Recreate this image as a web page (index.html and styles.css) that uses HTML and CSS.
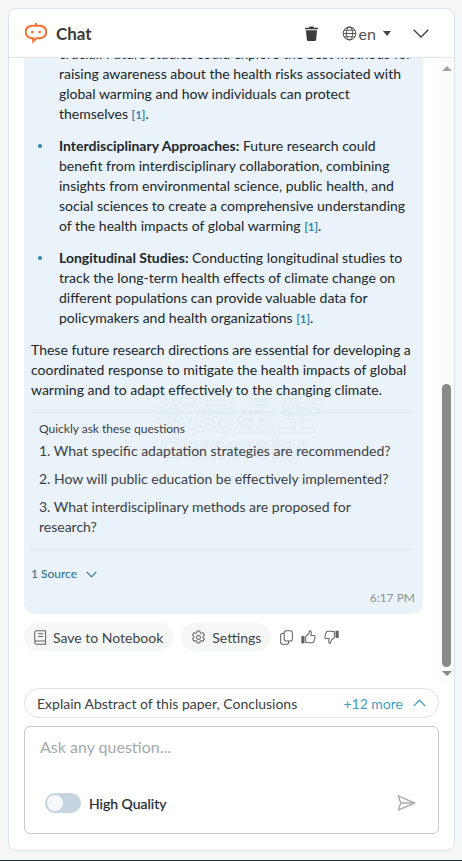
FILE: index.html
```html
<!DOCTYPE html>
<html lang="en">
<head>
<meta charset="utf-8">
<title>Chat</title>
<link rel="stylesheet" href="styles.css">
</head>
<body>
<div class="page">
<main class="card">
  <header class="head">
    <svg class="logo" viewBox="0 0 24 24" width="22" height="22" fill="none" stroke="#f37032" stroke-width="2.200">
      <path d="M12 1v3"/>
      <path d="M7.500 4h9a6.800 6.800 0 0 1 0 13.600h-4l-3.500 3.400v-3.400h-1.500a6.800 6.800 0 0 1 0-13.600z"/>
      <circle cx="8" cy="11" r="1.500" fill="#f37032" stroke="none"/>
      <circle cx="16" cy="11" r="1.500" fill="#f37032" stroke="none"/>
    </svg>
    <span class="title">Chat</span>
    <span class="spacer"></span>
    <svg class="trash" viewBox="0 0 14 16" width="13" height="15" fill="#3c3c3c">
      <path d="M0 1.800h4.300L5 .500h4l.7 1.300H14v1.700H0z"/>
      <path d="M1 4.500h12l-1 10.200c0 .7-.6 1.300-1.300 1.300H3.300C2.600 16 2 15.400 2 14.700z"/>
    </svg>
    <span class="lang">
      <svg viewBox="0 0 16 16" width="15" height="15" fill="none" stroke="#555" stroke-width="1.100">
        <circle cx="8" cy="8" r="6.800"/>
        <ellipse cx="8" cy="8" rx="3.200" ry="6.800"/>
        <path d="M1.200 8h13.600M2.200 4.500h11.600M2.200 11.500h11.600"/>
      </svg>
      <span>en</span>
      <span class="caret"></span>
    </span>
    <svg class="chev" viewBox="0 0 16 9" width="16" height="9" fill="none" stroke="#444" stroke-width="1.400">
      <path d="M.7.700 8 8 15.300.700"/>
    </svg>
  </header>

  <section class="scroll">
    <div class="stream">
      <article class="bubble">
        <ul class="points">
          <li class="first">crucial. Future studies could explore the best methods for raising awareness about the health risks associated with global warming and how individuals can protect themselves <a class="cite">[1]</a>.</li>
          <li><b>Interdisciplinary Approaches:</b> Future research could benefit from interdisciplinary collaboration, combining insights from environmental science, public health, and social sciences to create a comprehensive understanding of the health impacts of global warming <a class="cite">[1]</a>.</li>
          <li><b>Longitudinal Studies:</b> Conducting longitudinal studies to track the long-term health effects of climate change on different populations can provide valuable data for policymakers and health organizations <a class="cite">[1]</a>.</li>
        </ul>
        <p class="summary">These future research directions are essential for developing a coordinated response to mitigate the health impacts of global warming and to adapt effectively to the changing climate.</p>
        <div class="quick">
          <div class="quick-title">Quickly ask these questions</div>
          <div class="q">1. What specific adaptation strategies are recommended?</div>
          <div class="q">2. How will public education be effectively implemented?</div>
          <div class="q">3. What interdisciplinary methods are proposed for research?</div>
        </div>
        <div class="source">
          <span>1 Source</span>
          <svg viewBox="0 0 12 7" width="11" height="7" fill="none" stroke="#1d6a8c" stroke-width="1.200"><path d="M.7.700 6 6l5.300-5.300"/></svg>
        </div>
        <div class="time">6:17 PM</div>
        <div class="mark" aria-hidden="true">
          <div class="mark-a">游民星空</div>
          <div class="mark-b">Gamersky</div>
        </div>
      </article>
      <div class="actions">
        <button class="pill save">
          <svg viewBox="0 0 14 16" width="13" height="15" fill="none" stroke="#5f6468" stroke-width="1.100">
            <path d="M2.500.8h10v11h-10A1.700 1.700 0 0 0 .8 13.500V2.500A1.700 1.700 0 0 1 2.500.8z"/>
            <path d="M.8 13.500a1.700 1.700 0 0 0 1.700 1.700h10V12"/>
            <path d="M4.500 4h5.500M4.500 6.800h5.500"/>
          </svg>
          <span>Save to Notebook</span>
        </button>
        <button class="pill settings">
          <svg viewBox="0 0 16 16" width="15" height="15" fill="none" stroke="#5f6468" stroke-width="1.100">
            <path d="M6.600 1h2.800l.4 1.900 1.300.7 1.800-.6 1.400 2.400-1.400 1.300v1.500l1.400 1.300-1.400 2.400-1.800-.6-1.300.7-.4 1.900H6.600l-.4-1.900-1.300-.7-1.800.6-1.400-2.400 1.400-1.300V6.700L1.700 5.400l1.400-2.400 1.800.6 1.300-.7z" stroke-linejoin="round"/>
            <circle cx="8" cy="8" r="2.100"/>
          </svg>
          <span>Settings</span>
        </button>
        <span class="tools">
          <svg viewBox="0 0 14 16" width="13" height="15" fill="none" stroke="#5f6468" stroke-width="1.100">
            <rect x="4.500" y=".7" width="8.800" height="11" rx="2.200"/>
            <path d="M4.500 3.500H3A2.300 2.300 0 0 0 .7 5.800v7.200A2.300 2.300 0 0 0 3 15.300h4a2.300 2.300 0 0 0 2.300-2.300v-1.300"/>
          </svg>
          <svg viewBox="0 0 16 15" width="15" height="14" fill="none" stroke="#5f6468" stroke-width="1.100">
            <rect x=".3" y="6.500" width="3.400" height="7.800" fill="#5f6468" stroke="none"/>
            <path d="M5 7 8.300 3.800 9 .8c1.300 0 2 1 2 2.200l-.5 2.800h3.300c1 0 1.600.9 1.300 1.800l-1.500 5.200c-.2.600-.7.900-1.300.9H7.500L5 13z" stroke-linejoin="round"/>
          </svg>
          <svg viewBox="0 0 16 15" width="15" height="14" fill="none" stroke="#5f6468" stroke-width="1.100">
            <rect x="12.300" y=".7" width="3.400" height="7.800" fill="#5f6468" stroke="none"/>
            <path d="M11 8 7.700 11.200 7 14.200c-1.300 0-2-1-2-2.200l.5-2.800H2.200C1.200 9.200.6 8.300.9 7.400L2.400 2.200C2.600 1.600 3.100 1.300 3.700 1.300h4.800L11 2z" stroke-linejoin="round"/>
          </svg>
        </span>
      </div>
    </div>
    <div class="bar" aria-hidden="true">
      <span class="arrow up"></span>
      <span class="thumb"></span>
      <span class="arrow down"></span>
    </div>
  </section>

  <footer class="foot">
    <div class="chips">
      <span class="chip-text">Explain Abstract of this paper, Conclusions</span>
      <span class="more">+12 more</span>
      <svg viewBox="0 0 14 8" width="13" height="8" fill="none" stroke="#3f9cc0" stroke-width="1.300"><path d="M.7 7.300 7 1l6.300 6.300"/></svg>
    </div>
    <div class="box">
      <div class="placeholder">Ask any question...</div>
      <div class="box-row">
        <span class="toggle"><span class="knob"></span></span>
        <span class="hq">High Quality</span>
        <span class="spacer"></span>
        <svg viewBox="0 0 20 17" width="19" height="16" fill="none" stroke="#a9afb2" stroke-width="1.500" stroke-linejoin="round">
          <path d="M1.200 1 18.500 8.500 1.200 16 4 8.500z"/>
          <path d="M4 8.500h14.500"/>
        </svg>
      </div>
    </div>
  </footer>
</main>
</div>
</body>
</html>
```

FILE: styles.css
```css
* { box-sizing: border-box; }
html, body { margin: 0; height: 861px; overflow: hidden; }
body {
  background: #f5f7f7;
  border-bottom: 1px solid #1e2f3a;
  font-family: Lato, "Liberation Sans", sans-serif;
  color: #23282d;
}
.page { padding: 8px 7px 0 8px; }
.card {
  height: 843px;
  background: #fff;
  border: 1px solid #d9e2e6;
  border-radius: 8px;
  display: flex;
  flex-direction: column;
  overflow: hidden;
}
.head {
  flex: none;
  height: 49px;
  display: flex;
  align-items: center;
  padding: 0 25px 0 16px;
  border-bottom: 1px solid #dfe5e8;
}
.logo { margin-right: 9px; }
.title { font-size: 17px; font-weight: 700; color: #3a3a3a; }
.spacer { flex: 1; }
.trash { margin-right: 24px; }
.lang { display: flex; align-items: center; gap: 2px; font-size: 16px; color: #555; margin-right: 22px; }
.caret { width: 0; height: 0; margin-left: 5px; border: 4px solid transparent; border-top: 5px solid #444; border-bottom: 0; }
.scroll { flex: none; height: 624px; position: relative; overflow: hidden; }
.stream { margin: -14px 31px 0 15px; }
.bubble {
  position: relative;
  background: #e9f3f9;
  border-radius: 0 0 10px 10px;
  padding: 0 8px 6px 7px;
  font-size: 14px;
  line-height: 20px;
  color: #20262c;
}
.points { margin: 0; padding: 0 0 0 28px; list-style: none; }
.points li { position: relative; margin-bottom: 12px; }
.points li::before { content: ""; position: absolute; left: -21px; top: 8px; width: 4px; height: 4px; border-radius: 50%; background: #2a88ad; }
.points li.first::before { display: none; }
.points b { font-weight: 700; }
.cite { color: #2f87b3; font-size: 11.5px; font-weight: 700; line-height: 0; }
.summary { margin: 0; }
.quick { margin-top: 12px; padding: 7px 8px 12px; border-top: 1px solid #e2e6e8; border-bottom: 1px solid #e2e6e8; color: #3a4046; }
.quick-title { font-size: 12px; line-height: 18px; margin-bottom: 3px; }
.q { font-size: 14px; line-height: 20px; margin-bottom: 8px; }
.q:last-child { margin-bottom: 0; }
.source { display: flex; align-items: center; gap: 9px; margin-top: 14px; font-size: 12px; color: #1d6a8c; }
.time { text-align: right; font-size: 12px; color: #8b9196; margin-top: 4px; }
.mark { position: absolute; left: 108px; bottom: 152px; width: 200px; opacity: .07; text-align: center; pointer-events: none; }
.mark-a { font: italic 700 43px/46px "Noto Sans CJK SC", sans-serif; color: transparent; -webkit-text-stroke: 1px #6d93aa; }
.mark-b { font: 700 30px/28px "Liberation Sans", sans-serif; color: transparent; -webkit-text-stroke: 1px #777; }
.actions { display: flex; align-items: center; gap: 8px; margin-top: 9px; }
.pill {
  display: flex;
  align-items: center;
  gap: 6px;
  height: 28px;
  padding: 0 10px;
  border: 0;
  border-radius: 14px;
  background: #f5f7f7;
  font: 14px Lato, "Liberation Sans", sans-serif;
  color: #3f444a;
}
.tools { display: flex; align-items: center; gap: 8px; margin-left: 1px; }
.bar { position: absolute; top: 0; right: 0; bottom: 0; width: 15px; background: #fbfbfb; display: flex; flex-direction: column; align-items: center; }
.arrow { width: 0; height: 0; border: 5px solid transparent; }
.arrow.up { margin-top: 8px; border-bottom: 5px solid #a3a3a3; border-top: 0; }
.arrow.down { margin-top: 4px; border-top: 5px solid #8a8a8a; border-bottom: 0; }
.thumb { width: 9px; height: 283px; margin-top: 313px; border-radius: 5px; background: #8a8a8a; }
.foot { flex: 1; padding: 6px 15px 0; }
.chips {
  display: flex;
  align-items: center;
  height: 30px;
  padding: 0 12px;
  border: 1px solid #dfe3e6;
  border-radius: 15px;
  font-size: 14px;
  color: #3a4046;
}
.chip-text { flex: 1; }
.more { color: #3f9cc0; margin-right: 10px; font-size: 14px; }
.box {
  margin-top: 8px;
  height: 108px;
  border: 1px solid #c6cacd;
  border-radius: 6px;
  padding: 10px 15px 0;
}
.placeholder { font-size: 16px; line-height: 20px; color: #a4a9ae; }
.box-row { display: flex; align-items: center; margin: 36px 7px 0 5px; }
.toggle { width: 36px; height: 20px; border-radius: 10px; background: #c6d4e2; padding: 2px; margin-right: 8px; }
.knob { display: block; width: 16px; height: 16px; border-radius: 50%; background: #f5f7fa; }
.hq { font-size: 14px; color: #252a30; -webkit-text-stroke: .25px #252a30; }
```
